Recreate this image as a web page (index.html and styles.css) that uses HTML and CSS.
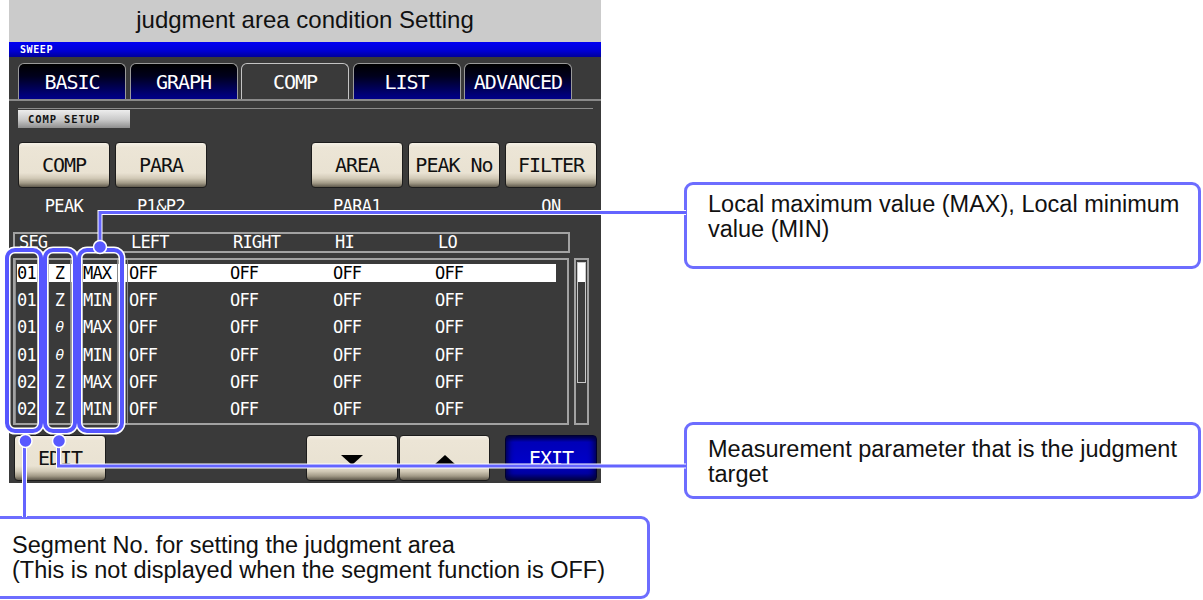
FILE: index.html
```html
<!DOCTYPE html>
<html lang="en">
<head>
  <meta charset="UTF-8" />
  <meta name="viewport" content="width=device-width, initial-scale=1" />
  <title>judgment area condition Setting</title>
  <link rel="stylesheet" href="styles.css">
</head>
<body>

<div class="figure">

  <div class="screen">
    <div class="titlebar">judgment area condition Setting</div>
    <div class="modebar">SWEEP</div>

    <div class="panel">
      <div class="tabs">
        <div class="tab">BASIC</div>
        <div class="tab">GRAPH</div>
        <div class="tab active">COMP</div>
        <div class="tab">LIST</div>
        <div class="tab">ADVANCED</div>
      </div>
      <div class="rule"></div>
      <div class="setup">COMP SETUP</div>

      <div class="keys">
        <div class="key-col"><div class="key">COMP</div><div class="key-value">PEAK</div></div>
        <div class="key-col"><div class="key">PARA</div><div class="key-value">P1&amp;P2</div></div>
        <div class="keys-gap"></div>
        <div class="key-col"><div class="key">AREA</div><div class="key-value">PARA1</div></div>
        <div class="key-col"><div class="key">PEAK No</div><div class="key-value"></div></div>
        <div class="key-col"><div class="key">FILTER</div><div class="key-value">ON</div></div>
      </div>

      <div class="table-head">
        <span>SEG</span><span>LEFT</span><span>RIGHT</span><span>HI</span><span>LO</span>
      </div>

      <div class="table-area">
        <div class="table-body">
          <div class="row sel"><span class="c-seg">01</span><span></span><span class="c-par">Z</span><span></span><span class="c-pk">MAX</span><span></span><span class="c-left">OFF</span><span>OFF</span><span>OFF</span><span>OFF</span></div>
          <div class="row"><span class="c-seg">01</span><span></span><span class="c-par">Z</span><span></span><span class="c-pk">MIN</span><span></span><span class="c-left">OFF</span><span>OFF</span><span>OFF</span><span>OFF</span></div>
          <div class="row"><span class="c-seg">01</span><span></span><span class="c-par theta">θ</span><span></span><span class="c-pk">MAX</span><span></span><span class="c-left">OFF</span><span>OFF</span><span>OFF</span><span>OFF</span></div>
          <div class="row"><span class="c-seg">01</span><span></span><span class="c-par theta">θ</span><span></span><span class="c-pk">MIN</span><span></span><span class="c-left">OFF</span><span>OFF</span><span>OFF</span><span>OFF</span></div>
          <div class="row"><span class="c-seg">02</span><span></span><span class="c-par">Z</span><span></span><span class="c-pk">MAX</span><span></span><span class="c-left">OFF</span><span>OFF</span><span>OFF</span><span>OFF</span></div>
          <div class="row"><span class="c-seg">02</span><span></span><span class="c-par">Z</span><span></span><span class="c-pk">MIN</span><span></span><span class="c-left">OFF</span><span>OFF</span><span>OFF</span><span>OFF</span></div>
        </div>
        <div class="scrollbar"><div class="thumb"></div></div>
      </div>

      <div class="bottom-keys">
        <div class="key">EDIT</div>
        <div class="keys-gap"></div>
        <div class="key arrow"><span class="tri-down"></span></div>
        <div class="key arrow"><span class="tri-up"></span></div>
        <div class="key exit">EXIT</div>
      </div>
    </div>
  </div>

  <div class="callout callout-peak">Local maximum value (MAX), Local minimum<br>value (MIN)</div>
  <div class="callout callout-param">Measurement parameter that is the judgment<br>target</div>
  <div class="callout callout-seg">Segment No. for setting the judgment area<br>(This is not displayed when the segment function is OFF)</div>

  <!-- leader lines and column markers -->
  <svg class="leaders" width="1203" height="600" viewBox="0 0 1203 600">
    <g fill="none" stroke="#fff" stroke-width="7">
      <rect x="7" y="250" width="34" height="181" rx="8"/>
      <rect x="45" y="250" width="30" height="181" rx="8"/>
      <rect x="79" y="250" width="43" height="181" rx="8"/>
    </g>
    <g fill="none" stroke="#fff" stroke-width="5">
      <path d="M100 247V212.5H686"/>
      <path d="M58.5 441V466H686"/>
      <path d="M24.5 441V517"/>
    </g>
    <g fill="none" stroke="#5656ff" stroke-width="4">
      <rect x="7" y="250" width="34" height="181" rx="8"/>
      <rect x="45" y="250" width="30" height="181" rx="8"/>
      <rect x="79" y="250" width="43" height="181" rx="8"/>
    </g>
    <g fill="none" stroke="#6464ff" stroke-width="3">
      <path d="M100 247V212.5H686"/>
      <path d="M58.5 441V466H686"/>
      <path d="M24.5 441V517"/>
    </g>
    <g fill="#5858ff" stroke="#fff" stroke-width="1.5">
      <circle cx="100" cy="247" r="6.5"/>
      <circle cx="59" cy="441" r="6.5"/>
      <circle cx="25.5" cy="441" r="6.5"/>
    </g>
  </svg>

</div>

</body>
</html>
```

FILE: styles.css
```css
* {
  box-sizing: border-box;
}

body {
  margin: 0;
  background: #fff;
  font-family: 'Liberation Sans', Arial, sans-serif;
}

.figure {
  position: relative;
  width: 1203px;
  height: 600px;
  overflow: hidden;
}

/* instrument screen */

.screen {
  width: 592px;
  margin-left: 9px;
}

.titlebar {
  height: 42px;
  background: #cbcbcb;
  color: #111;
  font-size: 24px;
  line-height: 40px;
  text-align: center;
}

.modebar {
  height: 15px;
  padding-left: 11px;
  background: linear-gradient(#0000f2, #0000d4 60%, #00009a);
  color: #fff;
  font: bold 10px/15px 'DejaVu Sans Mono', monospace;
  letter-spacing: 0.6px;
}

.panel {
  height: 426px;
  padding-top: 6px;
  background: #3a3a3a;
  color: #fff;
  font-family: 'DejaVu Sans Mono', monospace;
}

.tabs {
  display: flex;
  gap: 3.5px;
  padding-left: 9px;
  border-bottom: 2px solid #8a8a8a;
}

.tab {
  width: 108px;
  height: 36px;
  border: 1px solid #9a9a9a;
  border-bottom: none;
  border-radius: 6px 6px 0 0;
  background: linear-gradient(#000 0%, #00001c 35%, #00006a 80%, #00008a);
  font-size: 20px;
  letter-spacing: -1px;
  line-height: 36px;
  text-align: center;
}

.tab.active {
  background: #3a3a3a;
  border-color: #c4c4c4;
}

.rule {
  height: 1px;
  margin: 7px 8px 0 9px;
  background: #8c8c8c;
}

.setup {
  width: 112px;
  height: 18px;
  margin: 1px 0 0 9px;
  padding-left: 10px;
  background: linear-gradient(#ededed, #c8c8c8 55%, #8e8e8e);
  color: #111;
  font-size: 10.5px;
  font-weight: bold;
  letter-spacing: 0.9px;
  line-height: 18px;
}

.keys {
  display: flex;
  gap: 5px;
  margin-top: 14px;
  padding: 0 4px 0 9px;
}

.keys-gap {
  flex: 1;
}

.key-col {
  width: 92px;
}

.key {
  flex: none;
  width: 92px;
  height: 46px;
  border: 1px solid #1c1c1c;
  border-radius: 4px;
  background: linear-gradient(#f5f0e6 0%, #ece5d6 10%, #e9e2d2 68%, #d2cab7 80%, #a29a87 91%, #5f594c 100%);
  color: #111;
  font-size: 20px;
  letter-spacing: -1px;
  line-height: 44px;
  text-align: center;
}

.key-value {
  height: 30px;
  margin-top: 6px;
  font-size: 17px;
  letter-spacing: -0.6px;
  line-height: 24px;
  text-align: center;
}

/* comparison table */

.table-head {
  display: grid;
  grid-template-columns: 113px 102px 102px 103px 1fr;
  width: 557px;
  height: 21px;
  margin: 8px 0 0 4px;
  padding-left: 3px;
  border: 2px solid #a2a2a2;
  font-size: 17px;
  letter-spacing: -0.8px;
  line-height: 16px;
}

.table-head span:first-child {
  padding-left: 1px;
}

.table-area {
  display: flex;
  gap: 5px;
  margin: 5px 0 0 4px;
}

.table-body {
  width: 556px;
  height: 167px;
  border: 2px solid #a2a2a2;
}

.row {
  display: grid;
  grid-template-columns: 23px 10px 23px 11px 36px 9px 103px 103px 102px 1fr;
  height: 27.2px;
  font-size: 17px;
  letter-spacing: -0.8px;
  line-height: 27px;
}

.row.sel {
  background: linear-gradient(#fff, #fff) 2px 4px / 539px 18px no-repeat;
  color: #000;
}

.c-seg,
.c-par,
.c-pk {
  border-left: 1px solid #8a8a8a;
  border-right: 1px solid #8a8a8a;
}

.c-seg {
  padding-left: 1px;
}

.c-par {
  text-align: center;
}

.theta {
  font-style: italic;
  font-family: 'DejaVu Sans', sans-serif;
  font-size: 14px;
}

.c-left {
  border-left: 1px solid #8a8a8a;
  padding-left: 1px;
}

.scrollbar {
  width: 15px;
  height: 167px;
  padding: 2px 1px;
  border: 2px solid #a2a2a2;
}

.thumb {
  height: 121px;
  border: 1px solid #c8c8c8;
  background: linear-gradient(#fff, #fff) 0 0 / 100% 19px no-repeat;
}

.bottom-keys {
  display: flex;
  margin-top: 10px;
  padding: 0 4px 0 5px;
}

.arrow + .arrow {
  margin-left: 1px;
  width: 91px;
}

.exit {
  margin-left: 15px;
  border-color: #000030;
  background: linear-gradient(#000040 0%, #0000b8 14%, #0000c8 60%, #0000a0 85%, #000048 100%);
  box-shadow: inset 5px 0 6px -3px #000040, inset -5px 0 6px -3px #000040;
  color: #fff !important;
}

.tri-down,
.tri-up {
  display: inline-block;
  border-left: 11px solid transparent;
  border-right: 11px solid transparent;
  vertical-align: middle;
}

.tri-down {
  border-top: 10px solid #000;
}

.tri-up {
  border-bottom: 10px solid #000;
}

/* annotation callouts */

.callout {
  position: absolute;
  border: 3px solid #6d6dff;
  border-radius: 9px;
  background: #fff;
  color: #111;
  font-size: 23.5px;
  line-height: 25px;
  white-space: nowrap;
}

.callout-peak {
  left: 684px;
  top: 182px;
  width: 517px;
  height: 87px;
  padding: 7px 0 0 21px;
}

.callout-param {
  left: 684px;
  top: 422px;
  width: 517px;
  height: 77px;
  padding: 12px 0 0 21px;
}

.callout-seg {
  left: -10px;
  top: 516px;
  width: 660px;
  height: 83px;
  padding: 14px 0 0 19px;
}

.leaders {
  position: absolute;
  top: 0;
  left: 0;
  pointer-events: none;
}
```
